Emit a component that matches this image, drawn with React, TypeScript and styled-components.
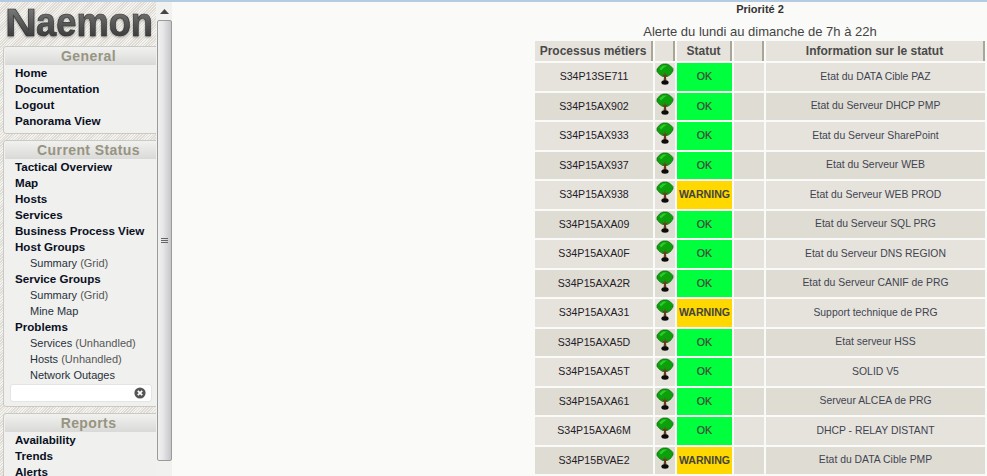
import styled, { createGlobalStyle } from 'styled-components';

const GlobalStyle = createGlobalStyle`
  html, body {
    margin: 0;
    padding: 0;
    height: 100%;
    overflow: hidden;
    background-color: #fafaf8;
    font-family: 'Liberation Sans', Arial, sans-serif;
  }
`;

const Page = styled.div`
  position: relative;
  display: flex;
  width: 987px;
  height: 476px;
  overflow: hidden;

  /* thin blue line of the parent frame, lies over everything */
  &::after {
    content: '';
    position: absolute;
    top: 0;
    left: 0;
    right: 0;
    height: 2px;
    background-color: #b4cbe2;
  }
`;

const Sidebar = styled.div`
  flex: 0 0 156px;
  height: 476px;
  overflow: hidden;
  padding-left: 3px;
  box-sizing: border-box;
  background: repeating-linear-gradient(
    135deg,
    #f3f2ee 0,
    #f3f2ee 1px,
    #dedcd5 1px,
    #dedcd5 2px
  );
`;

const Logo = styled.svg`
  display: block;
  margin-left: -3px;
  width: 156px;
  height: 46px;
  filter: drop-shadow(0 1px 1px rgba(0, 0, 0, 0.35));
`;

const Panel = styled.div`
  box-sizing: border-box;
  width: 170px;
  margin-bottom: 6px;
  padding: 1px 0 4px 1px;
  background-color: #f0f0ee;
  border: 1px solid #c9c9c6;
  border-radius: 3px;
`;

const PanelTitle = styled.div`
  height: 17px;
  line-height: 17px;
  text-align: center;
  font-size: 14px;
  font-weight: 700;
  letter-spacing: 0.4px;
  color: #979481;
  background: linear-gradient(#f0f0ee, #d9d9d7);
`;

const MenuList = styled.div`
  display: flex;
  flex-direction: column;
`;

const MenuLink = styled.a<{ $sub?: boolean }>`
  display: block;
  height: 16px;
  line-height: 16px;
  padding-left: ${(p) => (p.$sub ? '25px' : '10px')};
  font-size: ${(p) => (p.$sub ? '11px' : '11.6px')};
  font-weight: ${(p) => (p.$sub ? 400 : 700)};
  color: ${(p) => (p.$sub ? '#27313c' : '#0a0f1e')};
  white-space: nowrap;

  span {
    color: #565656;
  }
`;

const SearchBox = styled.div`
  display: flex;
  align-items: center;
  justify-content: flex-end;
  box-sizing: border-box;
  width: 142px;
  height: 18px;
  margin: 1px 0 0 5px;
  padding-right: 5px;
  background-color: #fff;
  border: 1px solid #e4e4e2;
  border-radius: 3px;
`;

const ScrollTrack = styled.div`
  flex: 0 0 16px;
  display: flex;
  flex-direction: column;
  align-items: center;
  padding-top: 2px;
  box-sizing: border-box;
  height: 476px;
  background-color: #f1f1ef;
`;

const ScrollArrow = styled.div`
  flex: 0 0 18px;
  display: flex;
  align-items: center;
  justify-content: center;
`;

const ScrollThumb = styled.div`
  display: flex;
  align-items: center;
  justify-content: center;
  box-sizing: border-box;
  width: 15px;
  height: 441px;
  border: 1px solid #9a9a9a;
  border-radius: 2px;
  background: linear-gradient(90deg, #f1f1f1, #e6e6e8 40%, #c6c6ca);
`;

const Grip = styled.div`
  width: 7px;
  height: 6px;
  background: repeating-linear-gradient(#666 0, #666 1px, transparent 1px, transparent 2px);
`;

const Main = styled.main`
  flex: 1;
  display: flex;
  justify-content: flex-end;
  padding-top: 2px;
  background-color: #fafaf8;
`;

const Content = styled.div`
  width: 454px;
  display: flex;
  flex-direction: column;
`;

const Priority = styled.div`
  height: 15px;
  line-height: 15px;
  text-align: center;
  font-size: 11px;
  font-weight: 700;
  color: #333;
`;

const Heading = styled.div`
  height: 22px;
  margin-top: 6px;
  line-height: 18px;
  text-align: center;
  font-size: 13px;
  color: #444;
  white-space: nowrap;
`;

const StatusTable = styled.table`
  table-layout: fixed;
  width: 454px;
  border-collapse: separate;
  border-spacing: 2px;
  margin-top: -6px;
`;

const HeadCell = styled.th`
  height: 20px;
  padding: 0 0 1px;
  background-color: #e6e3dc;
  border-right: 2px solid #a9a697;
  font-size: 12px;
  font-weight: 700;
  color: #4a4a4a;
  box-sizing: border-box;
`;

const Row = styled.tr<{ $even: boolean }>`
  height: ${(p) => (p.$even ? '27px' : '28px')};
  background-color: ${(p) => (p.$even ? '#dfdcd4' : '#e6e3dd')};
`;

const NameCell = styled.td`
  padding: 0 0 2px;
  text-align: center;
  font-size: 10.6px;
  color: #1e2026;
`;

const IconCell = styled.td`
  padding: 0;
  vertical-align: top;

  svg {
    display: block;
  }
`;

const StateCell = styled.td<{ $warn: boolean }>`
  padding: 0 0 2px;
  text-align: center;
  font-size: 10.6px;
  font-weight: ${(p) => (p.$warn ? 700 : 400)};
  color: #44443c;
  -webkit-text-stroke: ${(p) => (p.$warn ? '0' : '0.2px #44443c')};
  background-color: ${(p) => (p.$warn ? '#ffd800' : '#00ff3c')};
`;

const BlankCell = styled.td`
  padding: 0;
`;

const InfoCell = styled.td`
  padding: 0 0 2px;
  text-align: center;
  font-size: 10.4px;
  color: #3f4450;
`;

const TreeIcon = () => (
  <svg width="20" height="23" viewBox="0 0 20 23">
    <path
      d="M2 6 L5 2.5 L8 1 L12 1 L15 2.5 L18 5.5 L18 8 L15.5 11.5 L12.5 13.5 L7.5 13.5 L4.5 11.5 L2 8.5 Z"
      fill="#0ca00c"
      stroke="#0d6a0d"
      strokeWidth="0.7"
    />
    <path d="M4.5 5.5 L8 2.5 L12 2.5 L8.5 5 L6 7.5 Z" fill="#2ccc2c" />
    <path d="M9 14 L8.5 18 L11.5 18 L11 14 L13.5 10.5 L10.7 12.5 L10 9 L9.3 12.5 L6.5 10.5 Z" fill="#6b3a1e" />
    <ellipse cx="10" cy="19.5" rx="3.6" ry="2.2" fill="#0b0b0b" />
  </svg>
);

const ClearIcon = () => (
  <svg width="12" height="12" viewBox="0 0 12 12">
    <circle cx="6" cy="6" r="5.6" fill="#555" />
    <path d="M3.8 3.8 L8.2 8.2 M8.2 3.8 L3.8 8.2" stroke="#fff" strokeWidth="1.8" />
  </svg>
);

type Item = { label: string; note?: string; sub?: boolean };

const general: Item[] = [
  { label: 'Home' },
  { label: 'Documentation' },
  { label: 'Logout' },
  { label: 'Panorama View' },
];

const currentStatus: Item[] = [
  { label: 'Tactical Overview' },
  { label: 'Map' },
  { label: 'Hosts' },
  { label: 'Services' },
  { label: 'Business Process View' },
  { label: 'Host Groups' },
  { label: 'Summary', note: '(Grid)', sub: true },
  { label: 'Service Groups' },
  { label: 'Summary', note: '(Grid)', sub: true },
  { label: 'Mine Map', sub: true },
  { label: 'Problems' },
  { label: 'Services', note: '(Unhandled)', sub: true },
  { label: 'Hosts', note: '(Unhandled)', sub: true },
  { label: 'Network Outages', sub: true },
];

const reports: Item[] = [{ label: 'Availability' }, { label: 'Trends' }, { label: 'Alerts' }];

const rows = [
  ['S34P13SE711', 'OK', 'Etat du DATA Cible PAZ'],
  ['S34P15AX902', 'OK', 'Etat du Serveur DHCP PMP'],
  ['S34P15AX933', 'OK', 'Etat du Serveur SharePoint'],
  ['S34P15AX937', 'OK', 'Etat du Serveur WEB'],
  ['S34P15AX938', 'WARNING', 'Etat du Serveur WEB PROD'],
  ['S34P15AXA09', 'OK', 'Etat du Serveur SQL PRG'],
  ['S34P15AXA0F', 'OK', 'Etat du Serveur DNS REGION'],
  ['S34P15AXA2R', 'OK', 'Etat du Serveur CANIF de PRG'],
  ['S34P15AXA31', 'WARNING', 'Support technique de PRG'],
  ['S34P15AXA5D', 'OK', 'Etat serveur HSS'],
  ['S34P15AXA5T', 'OK', 'SOLID V5'],
  ['S34P15AXA61', 'OK', 'Serveur ALCEA de PRG'],
  ['S34P15AXA6M', 'OK', 'DHCP - RELAY DISTANT'],
  ['S34P15BVAE2', 'WARNING', 'Etat du DATA Cible PMP'],
];

const renderItems = (items: Item[]) =>
  items.map((item, i) => (
    <MenuLink key={i} $sub={item.sub}>
      {item.label} {item.note && <span>{item.note}</span>}
    </MenuLink>
  ));

const App = () => {
  return (
    <>
      <GlobalStyle />
      <Page>
        <Sidebar>
          <Logo viewBox="0 0 156 46">
            <defs>
              <linearGradient id="logoFill" x1="0" y1="0" x2="0" y2="1">
                <stop offset="0" stopColor="#8a8a8a" />
                <stop offset="0.55" stopColor="#565656" />
                <stop offset="1" stopColor="#2e2e2e" />
              </linearGradient>
            </defs>
            <text
              x="5"
              y="36"
              fontFamily="'Liberation Sans', sans-serif"
              fontWeight="700"
              fontSize="39"
              fill="url(#logoFill)"
              stroke="#333"
              strokeWidth="0.6"
              textLength="32"
              lengthAdjust="spacingAndGlyphs"
            >
              N
            </text>
            <g transform="translate(36 36) scale(1 1.08)">
              <text
                fontFamily="'Liberation Sans', sans-serif"
                fontWeight="700"
                fontSize="37"
                fill="url(#logoFill)"
                stroke="#333"
                strokeWidth="0.6"
                textLength="117"
                lengthAdjust="spacingAndGlyphs"
              >
                aemon
              </text>
            </g>
          </Logo>
          <Panel>
            <PanelTitle>General</PanelTitle>
            <MenuList>{renderItems(general)}</MenuList>
          </Panel>
          <Panel>
            <PanelTitle>Current Status</PanelTitle>
            <MenuList>{renderItems(currentStatus)}</MenuList>
            <SearchBox>
              <ClearIcon />
            </SearchBox>
          </Panel>
          <Panel>
            <PanelTitle>Reports</PanelTitle>
            <MenuList>{renderItems(reports)}</MenuList>
          </Panel>
        </Sidebar>
        <ScrollTrack>
          <ScrollArrow>
            <svg width="9" height="5" viewBox="0 0 9 5">
              <path d="M4.5 0 L9 5 L0 5 Z" fill="#444" />
            </svg>
          </ScrollArrow>
          <ScrollThumb>
            <Grip />
          </ScrollThumb>
        </ScrollTrack>
        <Main>
          <Content>
            <Priority>Priorité 2</Priority>
            <Heading>Alerte du lundi au dimanche de 7h à 22h</Heading>
            <StatusTable>
              <colgroup>
                <col style={{ width: 118 }} />
                <col style={{ width: 20 }} />
                <col style={{ width: 55 }} />
                <col style={{ width: 30 }} />
                <col />
              </colgroup>
              <thead>
                <tr>
                  <HeadCell>Processus métiers</HeadCell>
                  <HeadCell />
                  <HeadCell>Statut</HeadCell>
                  <HeadCell />
                  <HeadCell>Information sur le statut</HeadCell>
                </tr>
              </thead>
              <tbody>
                {rows.map(([name, state, info], i) => (
                  <Row key={name} $even={i % 2 === 1}>
                    <NameCell>{name}</NameCell>
                    <IconCell>
                      <TreeIcon />
                    </IconCell>
                    <StateCell $warn={state === 'WARNING'}>{state}</StateCell>
                    <BlankCell />
                    <InfoCell>{info}</InfoCell>
                  </Row>
                ))}
              </tbody>
            </StatusTable>
          </Content>
        </Main>
      </Page>
    </>
  );
};

export default App;
